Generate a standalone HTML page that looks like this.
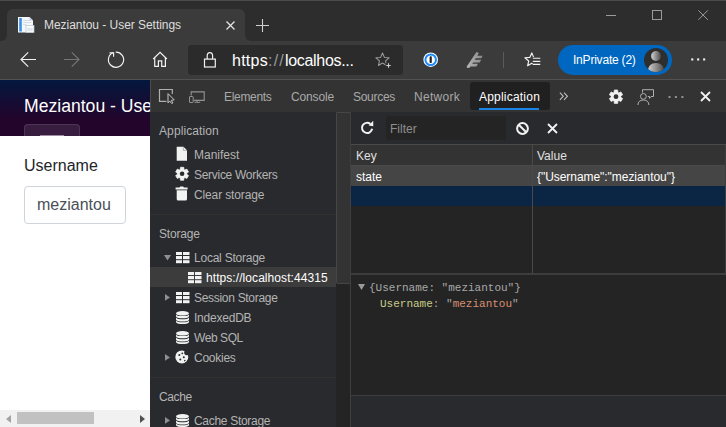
<!DOCTYPE html>
<html><head><meta charset="utf-8"><title>Meziantou - User Settings</title>
<style>
*{box-sizing:border-box;margin:0;padding:0}
html,body{width:726px;height:427px;overflow:hidden;background:#2b2b2b}
body{font-family:"Liberation Sans",sans-serif;font-size:12px;position:relative}
#root{position:absolute;left:0;top:0;width:726px;height:427px;overflow:hidden;background:#2d2d2d}
.a{position:absolute}
.t{position:absolute;white-space:pre;line-height:16px;height:16px}
svg{position:absolute;overflow:visible}
/* browser chrome */
#topline{left:0;top:0;width:726px;height:1px;background:#4b4b4b}
#tab{left:7px;top:9px;width:238px;height:32px;background:#3b3b3b;border-radius:6px 6px 0 0}
.flare{width:6px;height:6px;top:35px;background:#3b3b3b}
.flare i{position:absolute;left:0;top:0;width:6px;height:6px;background:#2d2d2d}
#toolbar{left:0;top:41px;width:726px;height:39px;background:#3b3b3b;border-bottom:1px solid #525252}
#addr{left:188px;top:45px;width:215px;height:30px;background:#2b2b2b;border-radius:4px}
#pill{left:558px;top:45px;width:114px;height:30px;border-radius:15px;background:#0067c0}
/* page */
#page{left:0;top:80px;width:150px;height:347px;background:#fff;overflow:hidden}
#hdr{left:0;top:0;width:150px;height:56px;background:linear-gradient(180deg,rgb(3,23,62) 0%,rgb(35,4,43) 70%,rgb(35,4,43) 100%);overflow:hidden}
#brand{left:24px;top:13px;font-size:17.6px;line-height:26px;height:26px;color:#fff}
#toggler{left:24px;top:44px;width:56px;height:40px;border:1px solid rgba(255,255,255,.1);border-radius:4px;background:rgba(255,255,255,.1)}
#lbl{left:24px;top:74px;font-size:16px;line-height:24px;height:24px;color:#212529}
#inp{left:24px;top:106px;width:102px;height:38px;border:1px solid #ced4da;border-radius:4px;background:#fff}
#inptxt{left:37px;top:113px;font-size:16px;line-height:24px;height:24px;color:#495057}
#hsb{left:0;top:330px;width:150px;height:17px;background:#f1f1f1}
#thumb{left:17px;top:2px;width:77px;height:12px;background:#c1c1c1}
/* devtools */
#dt{left:150px;top:80px;width:576px;height:347px;background:#292a2d;overflow:hidden;color:#bcbcbc}
#dtborder{left:0;top:0;width:1px;height:347px;background:#4c4c4c}
#dtbar{left:0;top:0;width:576px;height:32px;background:#333}
#apptab{left:320px;top:2px;width:80px;height:28px;background:#202020;border-radius:3px}
#appul{left:329px;top:28.300px;width:60px;height:2.200px;background:#1a85e6}
.tab{color:#a9a9a9;top:9px}
#side{left:0;top:32px;width:186px;height:315px;background:#292a2d}
#sidesb{left:186px;top:32px;width:14px;height:315px;background:#242424}
#sidethumb{left:0;top:0;width:15px;height:172px;background:#333;border:1px solid #464646;border-radius:0 0 2px 2px}
#sideline{left:200px;top:32px;width:1px;height:315px;background:#3f3f3f}
.sh{left:9px;color:#b4b4b4}
.si{left:44px;color:#b4b4b4}
#side .t{margin-top:1px}
.sep{left:0;width:186px;height:1px;background:#343231}
#sel{left:0;top:155px;width:186px;height:20px;background:#3c3c3c}
#main{left:201px;top:32px;width:375px;height:315px;background:#242424}
#fbar{left:0;top:0;width:375px;height:32px;background:#292a2d}
#finput{left:35px;top:4px;width:120px;height:24px;background:#242424;border-radius:2px}
#thead{left:0;top:32px;width:375px;height:22px;background:#333;border-top:1px solid #4a4a4a;border-bottom:1px solid #4a4a4a}
#row1{left:0;top:54px;width:375px;height:20px;background:#454545}
#row2{left:0;top:74px;width:375px;height:20px;background:#0b2544}
#coldiv{left:181px;top:33px;width:1px;height:128px;background:#4a4a4a}
#tblend{left:0;top:161px;width:375px;height:2px;background:#3d3d3d}
.mono{font-family:"Liberation Mono",monospace;font-size:11px}
#main .t{margin-top:1px}
#drawline{left:0;top:283px;width:375px;height:1px;background:#3d3d3d}
#drawer{left:0;top:284px;width:375px;height:31px;background:#292a2d}
</style></head><body>
<div id="root">
<div class="a" id="topline"></div>
<div class="a" id="tab"></div>
<div class="a flare" style="left:1px"><i style="border-radius:0 0 6px 0"></i></div>
<div class="a flare" style="left:245px"><i style="border-radius:0 0 0 6px"></i></div>
<div class="a" id="toolbar"></div>
<div class="a" id="addr"></div>

<!-- tab contents -->
<svg style="left:17px;top:16px" width="18" height="18" viewBox="0 0 18 18">
 <path d="M1 1h11.500l3.500 3.500v12H1z" fill="#f4f7fb"/>
 <path d="M12.500 1v3.500h3.500z" fill="#c3cfdc"/>
 <rect x="2.200" y="2" width="2.600" height="13.500" fill="#3d8fe0"/>
 <path d="M6.200 4.500h7M6.200 6.500h8M6.200 8.500h3" stroke="#d5dde6" stroke-width="1"/>
 <rect x="9" y="9.500" width="8" height="7" fill="#fdfdfe" stroke="#b8c4d0" stroke-width=".7"/>
 <rect x="10.300" y="11.800" width="5.400" height="3.400" fill="#dfe6ee"/>
</svg>
<div class="t" style="left:44px;top:17px;color:#dedede;letter-spacing:-0.04px">Meziantou - User Settings</div>
<svg style="left:226px;top:21px" width="9" height="9" viewBox="0 0 9 9"><path d="M0.5 0.5l8 8M8.5 0.5l-8 8" stroke="#e6e6e6" stroke-width="1.2" fill="none"/></svg>
<svg style="left:256px;top:19px" width="13" height="13" viewBox="0 0 13 13"><path d="M6.5 0v13M0 6.5h13" stroke="#cfcfcf" stroke-width="1.1" fill="none"/></svg>
<!-- window controls -->
<svg style="left:606px;top:15px" width="10" height="1" viewBox="0 0 10 1"><rect width="10" height="1" fill="#9a9a9a"/></svg>
<svg style="left:652px;top:10px" width="10" height="10" viewBox="0 0 10 10"><rect x=".5" y=".5" width="9" height="9" stroke="#9a9a9a" fill="none"/></svg>
<svg style="left:698px;top:10px" width="10" height="10" viewBox="0 0 10 10"><path d="M.3 .3l9.600 9.600M9.900 .3l-9.600 9.600" stroke="#9a9a9a" stroke-width="1" fill="none"/></svg>

<!-- nav icons -->
<svg style="left:20px;top:52px" width="16" height="15" viewBox="0 0 16 15"><path d="M16 7.500H1M8.200 .400L1 7.500l7.200 7.100" stroke="#f2f2f2" stroke-width="1.150" fill="none"/></svg>
<svg style="left:64px;top:52px" width="16" height="15" viewBox="0 0 16 15"><path d="M0 7.500h15M7.800 .400L15 7.500l-7.200 7.100" stroke="#757575" stroke-width="1.150" fill="none"/></svg>
<svg style="left:107px;top:51px" width="18" height="18" viewBox="0 0 18 18"><path d="M8.73 1.10A7.6 7.6 0 1 1 6.40 1.56" stroke="#f2f2f2" stroke-width="1.150" fill="none"/><path d="M2.50 1.86H6.60V5.76" stroke="#f2f2f2" stroke-width="1.150" fill="none"/></svg>
<svg style="left:152px;top:51px" width="16" height="17" viewBox="0 0 16 17"><path d="M1.200 8L8.050 1.300 14.900 8" stroke="#f2f2f2" stroke-width="1.200" fill="none"/><path d="M2.700 6.800v8.600h3.700v-5.600h3.300v5.600h3.700V6.800" stroke="#f2f2f2" stroke-width="1.200" fill="none"/></svg>
<!-- address bar -->
<svg style="left:203px;top:51px" width="14" height="17" viewBox="0 0 14 17"><rect x="1.500" y="8.100" width="10.800" height="7.900" stroke="#f2f2f2" stroke-width="1.200" fill="none"/><path d="M4.200 8V4.900a2.700 3.300 0 0 1 5.400 0V8" stroke="#f2f2f2" stroke-width="1.200" fill="none"/></svg>
<div class="t" style="left:232px;top:49px;font-size:16px;line-height:24px;height:24px;color:#fff"><span style="letter-spacing:0.26px">https</span><span style="color:#9a9a9a;letter-spacing:1.22px">://</span><span style="letter-spacing:-0.31px">localhos...</span></div>
<svg style="left:375px;top:52px" width="17" height="16" viewBox="0 0 17 16"><path d="M7.500 1l1.900 4.400 4.700.4-3.600 3.100 1.100 4.600-4.100-2.500-4.100 2.500 1.100-4.600L.9 5.800l4.700-.4z" stroke="#9a9a9a" stroke-width="1.050" fill="none" stroke-linejoin="round"/><rect x="10.500" y="11" width="6" height="5" fill="#2d2d2d"/><path d="M13.500 11.300v4.400M11.300 13.500h4.400" stroke="#d0d0d0" stroke-width="1.100"/></svg>
<!-- 1password -->
<svg style="left:423px;top:52px" width="16" height="16" viewBox="0 0 16 16"><circle cx="7.700" cy="7.700" r="7.300" fill="#fff"/><circle cx="7.700" cy="7.700" r="5.300" fill="none" stroke="#1a8cff" stroke-width="2"/><rect x="6.600" y="4.300" width="2.200" height="6.800" rx=".8" fill="#1f1f1f"/></svg>
<!-- feather -->
<svg style="left:466px;top:52px" width="17" height="16" viewBox="0 0 17 16"><defs><linearGradient id="fg" x1="0" y1="0" x2="1" y2="0"><stop offset="0" stop-color="#b4b4b4"/><stop offset="1" stop-color="#8a8a8a"/></linearGradient></defs><path d="M.9 15.700L.7 14.400 10.500 0 12.900 .9 11.300 3.700H16.600L15.300 6.300H9.700L8.700 7.800H15.100L13.800 10.400H7.200L6.200 11.800H12L10.400 14.400H4.500L3.200 15.900z" fill="url(#fg)"/></svg>
<div class="a" style="left:503px;top:52px;width:1px;height:16px;background:#5a5a5a"></div>
<!-- favorites -->
<svg style="left:524px;top:52px" width="17" height="16" viewBox="0 0 17 16"><path d="M7.800 .9l1.900 4.500 4.900.4-3.700 3.200 1.100 4.800-4.200-2.600-4.200 2.600 1.100-4.800L.9 5.800l4.900-.4z" stroke="#f2f2f2" stroke-width="1.150" fill="none" stroke-linejoin="round"/><rect x="8.800" y="5" width="8.200" height="11" fill="#3b3b3b"/><path d="M8.800 6.250h7.500M8.800 9.300h7.500M8.800 12.400h7.500" stroke="#f2f2f2" stroke-width="1.150"/></svg>
<!-- pill -->
<div class="a" id="pill"></div>
<div class="t" style="left:573px;top:52px;color:#fff;font-size:12px;letter-spacing:-0.21px">InPrivate (2)</div>
<svg style="left:644px;top:48px" width="24" height="24" viewBox="0 0 24 24"><defs><linearGradient id="g1" x1="0" y1="0" x2="1" y2="0"><stop offset="0" stop-color="#d2d2d2"/><stop offset="1" stop-color="#4a4a4a"/></linearGradient><clipPath id="c1"><circle cx="12" cy="12" r="12"/></clipPath></defs><circle cx="12" cy="12" r="12" fill="#2e2e2e"/><g clip-path="url(#c1)"><circle cx="12" cy="8" r="4.900" fill="url(#g1)"/><path d="M3.800 24c0-5.800 3.400-9 8.200-9s8.200 3.200 8.200 9z" fill="url(#g1)"/></g></svg>
<svg style="left:691px;top:58px" width="15" height="3" viewBox="0 0 15 3"><rect x=".2" y=".4" width="2.100" height="2.100" fill="#f2f2f2"/><rect x="6.100" y=".4" width="2.100" height="2.100" fill="#f2f2f2"/><rect x="12.100" y=".4" width="2.100" height="2.100" fill="#f2f2f2"/></svg>

<!-- PAGE -->
<div class="a" id="page">
 <div class="a" id="hdr">
  <div class="t" id="brand">Meziantou - User Settings</div>
  <div class="a" id="toggler"><div class="a" style="left:15px;top:10px;width:24px;height:2px;background:rgba(255,255,255,.5)"></div></div>
 </div>
 <div class="t" id="lbl">Username</div>
 <div class="a" id="inp"></div>
 <div class="t" id="inptxt">meziantou</div>
 <div class="a" id="hsb">
  <div class="a" id="thumb"></div>
  <svg style="left:5.500px;top:4.500px" width="5" height="8" viewBox="0 0 5 8"><path d="M5 0v8L0 4z" fill="#a3a3a3"/></svg>
  <svg style="left:139.500px;top:4.500px" width="5" height="8" viewBox="0 0 5 8"><path d="M0 0v8l5-4z" fill="#505050"/></svg>
 </div>
</div>

<!-- DEVTOOLS -->
<div class="a" id="dt">
 <div class="a" id="dtbar"></div><div class="a" id="dtborder"></div>
 <div class="a" id="apptab"></div>
 <div class="a" id="appul"></div>
 <svg style="left:8px;top:8px" width="18" height="17" viewBox="0 0 18 17"><path d="M8.500 13.400H1.500V1.500h12.800V6" stroke="#b0b0b0" stroke-width="1.200" fill="none"/><path d="M10 5.600v9.300l1.800-1.800 1.900 2.400 1.200-.6-1.600-2.500 2.900-.6z" fill="#333" stroke="#c8c8c8" stroke-width="1" stroke-linejoin="round"/></svg>
 <svg style="left:38px;top:10px" width="18" height="14" viewBox="0 0 18 14"><path d="M3.200 5.600V1.900h13v8.500H6" stroke="#929292" stroke-width="1.100" fill="none"/><rect x="1.500" y="6.500" width="3.700" height="6" rx=".5" stroke="#929292" stroke-width="1" fill="#333"/><path d="M6.600 12.300h5.600M8.300 10.500l1.200 1.800" stroke="#929292" stroke-width="1"/></svg>
 <div class="t tab" style="left:74px;letter-spacing:-0.32px">Elements</div>
 <div class="t tab" style="left:141px;letter-spacing:-0.15px">Console</div>
 <div class="t tab" style="left:203px;letter-spacing:-0.29px">Sources</div>
 <div class="t tab" style="left:264px;letter-spacing:0.28px">Network</div>
 <div class="t tab" style="left:329px;letter-spacing:0.21px;color:#fff">Application</div>
 <svg style="left:409px;top:11.500px" width="9.500" height="8.500" viewBox="0 0 11 9" preserveAspectRatio="none"><path d="M1 .6l4 3.900-4 3.900M5.800 .6l4 3.900-4 3.900" stroke="#c4c4c4" stroke-width="1.150" fill="none"/></svg>
 <!-- gear -->
<svg style="left:458px;top:9px" width="16" height="16" viewBox="0 0 16 16"><path d="M6.08 3.41L6.29 1.01L9.71 1.01L9.92 3.41L10.76 3.89L12.94 2.88L14.64 5.84L12.67 7.21L12.67 8.19L14.64 9.56L12.94 12.52L10.76 11.51L9.92 11.99L9.71 14.39L6.29 14.39L6.08 11.99L5.24 11.51L3.06 12.52L1.36 9.56L3.33 8.19L3.33 7.21L1.36 5.84L3.06 2.88L5.24 3.89z" fill="#f2f2f2" stroke="#f2f2f2" stroke-width=".7" stroke-linejoin="round"/><circle cx="8" cy="7.7" r="4.70" fill="#f2f2f2"/><circle cx="8" cy="7.7" r="2.4" fill="#333"/></svg>
 <!-- feedback -->
 <svg style="left:486px;top:8px" width="20" height="18" viewBox="0 0 20 18"><path d="M6.500 4.600V1.700h11v6.800h-2.300l-1.700 1.900V8.500h-1.700" stroke="#b0b0b0" stroke-width="1" fill="none"/><circle cx="7.400" cy="8.400" r="2.900" stroke="#b0b0b0" stroke-width="1" fill="none"/><path d="M1.900 17c0-3.300 2.300-5 5.500-5s5.500 1.700 5.500 5" stroke="#b0b0b0" stroke-width="1" fill="none"/></svg>
 <svg style="left:518px;top:16px" width="17" height="3" viewBox="0 0 17 3"><rect x=".5" y="0" width="2" height="2" fill="#939393"/><rect x="6.900" y="0" width="2" height="2" fill="#939393"/><rect x="13.400" y="0" width="2" height="2" fill="#939393"/></svg>
 <svg style="left:550px;top:11px" width="11" height="11" viewBox="0 0 11 11"><path d="M1 1l9 9M10 1l-9 9" stroke="#f0f0f0" stroke-width="1.800" fill="none"/></svg>

 <!-- sidebar -->
 <div class="a" id="side">
  <div class="a" id="sel"></div>
  <div class="t sh" style="top:10px;letter-spacing:0.1px">Application</div>
  <div class="t si" style="top:34px">Manifest</div>
  <div class="t si" style="top:54px;letter-spacing:-0.29px">Service Workers</div>
  <div class="t si" style="top:74px;letter-spacing:-0.13px">Clear storage</div>
  <div class="a sep" style="top:102px"></div>
  <div class="t sh" style="top:113px;letter-spacing:-0.2px">Storage</div>
  <div class="t si" style="top:137px;letter-spacing:-0.23px">Local Storage</div>
  <div class="t" style="left:56px;top:157px;color:#fff;letter-spacing:0.07px">https://localhost:44315</div>
  <div class="t si" style="top:177px;letter-spacing:-0.3px">Session Storage</div>
  <div class="t si" style="top:197px;letter-spacing:-0.22px">IndexedDB</div>
  <div class="t si" style="top:217px;letter-spacing:-0.43px">Web SQL</div>
  <div class="t si" style="top:237px;letter-spacing:-0.25px">Cookies</div>
  <div class="a sep" style="top:265px"></div>
  <div class="t sh" style="top:276px;letter-spacing:-0.4px">Cache</div>
  <div class="t si" style="top:300px;letter-spacing:-0.3px">Cache Storage</div>
  <!-- icons -->
  <svg style="left:26px;top:34px" width="12" height="16" viewBox="0 0 12 16"><path d="M.7 .7h6.800l3.500 3.500v10.500H.7z" fill="#f2f2f2"/><path d="M7.300 .7v3.700h3.700" fill="none" stroke="#8a8a8a" stroke-width=".6"/></svg>
<svg style="left:24px;top:54px" width="16" height="16" viewBox="0 0 16 16"><path d="M6.22 3.60L6.44 1.31L9.76 1.31L9.98 3.60L10.80 4.08L12.89 3.12L14.55 5.99L12.68 7.32L12.68 8.28L14.55 9.61L12.89 12.48L10.80 11.52L9.98 12.00L9.76 14.29L6.44 14.29L6.22 12.00L5.40 11.52L3.31 12.48L1.65 9.61L3.52 8.28L3.52 7.32L1.65 5.99L3.31 3.12L5.40 4.08z" fill="#f2f2f2" stroke="#f2f2f2" stroke-width=".7" stroke-linejoin="round"/><circle cx="8.1" cy="7.8" r="4.60" fill="#f2f2f2"/><circle cx="8.1" cy="7.8" r="2.3" fill="#292a2d"/></svg>
  <svg style="left:25px;top:74px" width="14" height="15" viewBox="0 0 14 15"><path d="M.6 1.500h3.900l.7-.9h3l.7.900h3.700v1.900H.6z" fill="#f2f2f2"/><path d="M1.700 4.200h10.300v8.800a1.500 1.500 0 0 1-1.500 1.500h-7.300a1.500 1.500 0 0 1-1.500-1.500z" fill="#f2f2f2"/></svg>
  <!-- grid icons -->
  <svg style="left:26px;top:140px" width="14" height="12" viewBox="0 0 14 12"><g fill="#f2f2f2"><rect x="0" y="0" width="6" height="3"/><rect x="7" y="0" width="6.500" height="3"/><rect x="0" y="4" width="6" height="3.200"/><rect x="7" y="4" width="6.500" height="3.200"/><rect x="0" y="8.200" width="6" height="3"/><rect x="7" y="8.200" width="6.500" height="3"/></g></svg>
  <svg style="left:38px;top:160px" width="14" height="12" viewBox="0 0 14 12"><g fill="#f2f2f2"><rect x="0" y="0" width="6" height="3"/><rect x="7" y="0" width="6.500" height="3"/><rect x="0" y="4" width="6" height="3.200"/><rect x="7" y="4" width="6.500" height="3.200"/><rect x="0" y="8.200" width="6" height="3"/><rect x="7" y="8.200" width="6.500" height="3"/></g></svg>
  <svg style="left:26px;top:180px" width="14" height="12" viewBox="0 0 14 12"><g fill="#f2f2f2"><rect x="0" y="0" width="6" height="3"/><rect x="7" y="0" width="6.500" height="3"/><rect x="0" y="4" width="6" height="3.200"/><rect x="7" y="4" width="6.500" height="3.200"/><rect x="0" y="8.200" width="6" height="3"/><rect x="7" y="8.200" width="6.500" height="3"/></g></svg>
  <!-- db icons -->
  <svg style="left:25.6px;top:199.1px" width="13" height="14" viewBox="0 0 13 14"><g fill="#f2f2f2"><ellipse cx="6.500" cy="2.300" rx="6.500" ry="2.300"/><path d="M0 3.4c1 1.50 3.700 1.7 6.500 1.7s5.500-0.20 6.500-1.7v2.2c-1 1.50-3.700 1.7-6.500 1.7s-5.500-0.20-6.500-1.7z"/><path d="M0 6.5c1 1.50 3.700 1.7 6.500 1.7s5.500-0.20 6.500-1.7v2.2c-1 1.50-3.700 1.7-6.500 1.7s-5.500-0.20-6.500-1.7z"/><path d="M0 9.6c1 1.50 3.700 1.7 6.500 1.7s5.500-0.20 6.500-1.7v1.7c-1 1.50-3.700 1.7-6.500 1.7s-5.500-0.20-6.500-1.7z"/></g></svg>
  <svg style="left:25.6px;top:219.1px" width="13" height="14" viewBox="0 0 13 14"><g fill="#f2f2f2"><ellipse cx="6.500" cy="2.300" rx="6.500" ry="2.300"/><path d="M0 3.4c1 1.50 3.700 1.7 6.500 1.7s5.500-0.20 6.500-1.7v2.2c-1 1.50-3.700 1.7-6.500 1.7s-5.500-0.20-6.500-1.7z"/><path d="M0 6.5c1 1.50 3.700 1.7 6.500 1.7s5.500-0.20 6.500-1.7v2.2c-1 1.50-3.700 1.7-6.500 1.7s-5.500-0.20-6.500-1.7z"/><path d="M0 9.6c1 1.50 3.700 1.7 6.500 1.7s5.500-0.20 6.500-1.7v1.7c-1 1.50-3.700 1.7-6.500 1.7s-5.500-0.20-6.500-1.7z"/></g></svg>
  <svg style="left:25.6px;top:302.1px" width="13" height="14" viewBox="0 0 13 14"><g fill="#f2f2f2"><ellipse cx="6.500" cy="2.300" rx="6.500" ry="2.300"/><path d="M0 3.4c1 1.50 3.700 1.7 6.500 1.7s5.500-0.20 6.500-1.7v2.2c-1 1.50-3.700 1.7-6.500 1.7s-5.500-0.20-6.500-1.7z"/><path d="M0 6.5c1 1.50 3.700 1.7 6.500 1.7s5.500-0.20 6.500-1.7v2.2c-1 1.50-3.700 1.7-6.500 1.7s-5.500-0.20-6.500-1.7z"/><path d="M0 9.6c1 1.50 3.700 1.7 6.500 1.7s5.500-0.20 6.500-1.7v1.7c-1 1.50-3.700 1.7-6.500 1.7s-5.500-0.20-6.500-1.7z"/></g></svg>
  <!-- cookie -->
  <svg style="left:25.100px;top:237.900px" width="14" height="14" viewBox="0 0 14 14"><circle cx="6.800" cy="6.900" r="6.500" fill="#f2f2f2"/><circle cx="11.800" cy="2.600" r="2.600" fill="#292a2d"/><circle cx="4.300" cy="5" r="1" fill="#292a2d"/><circle cx="7.300" cy="3.300" r=".9" fill="#292a2d"/><circle cx="8.800" cy="7.300" r="1" fill="#292a2d"/><circle cx="5.300" cy="9.600" r="1" fill="#292a2d"/><circle cx="9.800" cy="10.600" r=".8" fill="#292a2d"/></svg>
  <!-- triangles -->
  <svg style="left:14px;top:143.200px" width="7" height="6" viewBox="0 0 7 6"><path d="M0 0h7L3.500 5.500z" fill="#8f8f8f"/></svg>
  <svg style="left:15.300px;top:181.8px" width="5" height="7" viewBox="0 0 5 7"><path d="M0 0v6.800l5-3.400z" fill="#8f8f8f"/></svg>
  <svg style="left:15.300px;top:241.8px" width="5" height="7" viewBox="0 0 5 7"><path d="M0 0v6.800l5-3.400z" fill="#8f8f8f"/></svg>
  <svg style="left:15.300px;top:304.8px" width="5" height="7" viewBox="0 0 5 7"><path d="M0 0v6.800l5-3.400z" fill="#8f8f8f"/></svg>
 </div>
 <div class="a" id="sidesb"><div class="a" id="sidethumb"></div></div>
 <div class="a" id="sideline"></div>

 <!-- main -->
 <div class="a" id="main">
  <div class="a" id="fbar"></div>
  <div class="a" id="finput"></div>
  <div class="t" style="left:39px;top:8px;color:#8f8f8f">Filter</div>
  <svg style="left:10px;top:9px" width="14" height="14" viewBox="0 0 14 14"><path d="M9.380 2.990A5.100 5.100 0 1 0 11.120 7.790" stroke="#f2f2f2" stroke-width="2" fill="none"/><path d="M12.200 -.2L7.600 4.400 12.300 5.300z" fill="#f2f2f2"/></svg>
  <svg style="left:165px;top:10px" width="13" height="13" viewBox="0 0 13 13"><circle cx="6.500" cy="6.500" r="5.400" stroke="#f2f2f2" stroke-width="2" fill="none"/><path d="M2.700 2.700l7.600 7.600" stroke="#f2f2f2" stroke-width="2"/></svg>
  <svg style="left:195.500px;top:10.500px" width="11" height="11" viewBox="0 0 11 11"><path d="M1 1l9 9M10 1l-9 9" stroke="#f2f2f2" stroke-width="1.800" fill="none"/></svg>
  <div class="a" id="thead"></div>
  <div class="a" id="row1"></div>
  <div class="a" id="row2"></div>
  <div class="a" id="coldiv"></div><div class="a" style="left:374px;top:33px;width:1px;height:128px;background:#3d3d3d"></div>
  <div class="t" style="left:5px;top:35px;color:#e0e0e0">Key</div>
  <div class="t" style="left:186px;top:35px;color:#e0e0e0">Value</div>
  <div class="t" style="left:5px;top:56px;color:#fff">state</div>
  <div class="t" style="left:186px;top:56px;color:#fff;letter-spacing:-0.05px">{"Username":"meziantou"}</div>
  <div class="a" id="tblend"></div>
  <svg style="left:7px;top:172px" width="7" height="6" viewBox="0 0 7 6"><path d="M0 0h7L3.500 6z" fill="#9a9a9a"/></svg>
  <div class="t mono" style="left:18px;top:167px;color:#a8a8a8">{Username: "meziantou"}</div>
  <div class="t mono" style="left:29px;top:183px;color:#a8a8a8"><span style="color:#c8cc8a">Username</span>: "<span style="color:#d98e73">meziantou</span>"</div>
  <div class="a" id="drawline"></div>
  <div class="a" id="drawer"></div>
 </div>
</div>
</div>
</body></html>
